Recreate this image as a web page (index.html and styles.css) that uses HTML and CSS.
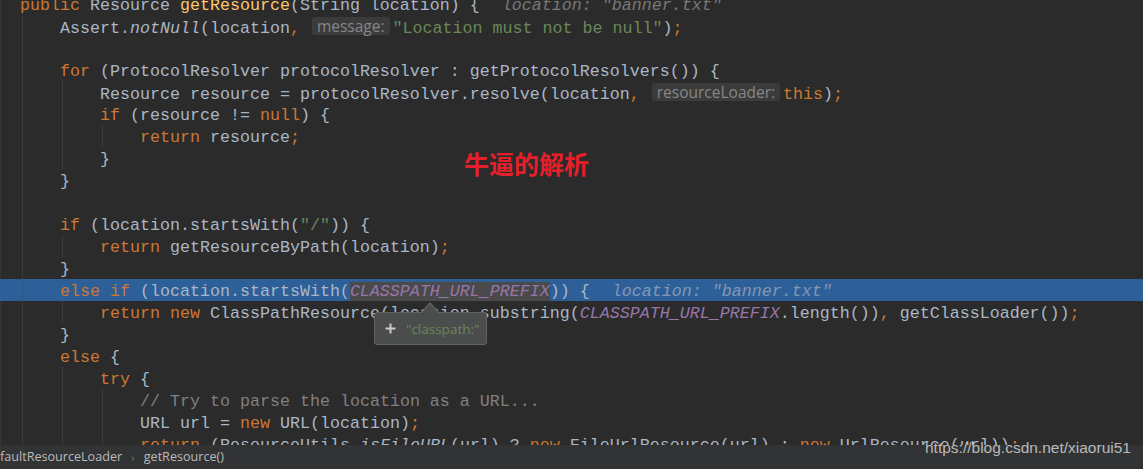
FILE: index.html
```html
<!DOCTYPE html>
<html>
<head>
<meta charset="utf-8">
<link rel="stylesheet" href="styles.css">
</head>
<body>
<div class="ide">
  <div class="editor">
    <div class="code">
      <div class="ln"><span class="k">public</span> Resource <span class="f">getResource</span>(String location) {<span class="dv">location: "banner.txt"</span></div>
      <div class="ln"><span class="i"></span>Assert.<span class="it">notNull</span>(location<span class="k">,</span> <span class="h">message:</span><span class="s">"Location must not be null"</span>)<span class="k">;</span></div>
      <div class="ln"><span class="i"></span></div>
      <div class="ln"><span class="i"></span><span class="k">for</span> (ProtocolResolver protocolResolver : getProtocolResolvers()) {</div>
      <div class="ln"><span class="i"></span><span class="i"></span>Resource resource = protocolResolver.resolve(location<span class="k">,</span> <span class="h">resourceLoader:</span><span class="k">this</span>)<span class="k">;</span></div>
      <div class="ln"><span class="i"></span><span class="i"></span><span class="k">if</span> (resource != <span class="k">null</span>) {</div>
      <div class="ln"><span class="i"></span><span class="i"></span><span class="i"></span><span class="k">return</span> resource<span class="k">;</span></div>
      <div class="ln"><span class="i"></span><span class="i"></span>}</div>
      <div class="ln"><span class="i"></span>}</div>
      <div class="ln"><span class="i"></span></div>
      <div class="ln"><span class="i"></span><span class="k">if</span> (location.startsWith(<span class="s">"/"</span>)) {</div>
      <div class="ln"><span class="i"></span><span class="i"></span><span class="k">return</span> getResourceByPath(location)<span class="k">;</span></div>
      <div class="ln"><span class="i"></span>}</div>
      <div class="ln exec"><span class="i"></span><span class="k">else if</span> (location.startsWith(<span class="c sel">CLASSPATH_URL_PREFIX</span>)) {<span class="dv">location: "banner.txt"</span></div>
      <div class="ln"><span class="i"></span><span class="i"></span><span class="k">return new</span> ClassPathResource(location.substring(<span class="c">CLASSPATH_URL_PREFIX</span>.length())<span class="k">,</span> getClassLoader())<span class="k">;</span></div>
      <div class="ln"><span class="i"></span>}</div>
      <div class="ln"><span class="i"></span><span class="k">else</span> {</div>
      <div class="ln"><span class="i"></span><span class="i"></span><span class="k">try</span> {</div>
      <div class="ln"><span class="i"></span><span class="i"></span><span class="i"></span><span class="cm">// Try to parse the location as a URL...</span></div>
      <div class="ln"><span class="i"></span><span class="i"></span><span class="i"></span>URL url = <span class="k">new</span> URL(location)<span class="k">;</span></div>
      <div class="ln"><span class="i"></span><span class="i"></span><span class="i"></span><span class="k">return</span> (ResourceUtils.<span class="it">isFileURL</span>(url) ? <span class="k">new</span> FileUrlResource(url) : <span class="k">new</span> UrlResource(url))<span class="k">;</span></div>
    </div>
    <div class="note">牛逼的解析</div>
    <div class="tip">
      <svg class="plus" width="11" height="11" viewBox="0 0 11 11"><path d="M5.5 0.5v10M0.5 5.5h10" stroke="#c9c9c9" stroke-width="2"/></svg>
      <span class="tipv">"classpath:"</span>
    </div>
  </div>
  <div class="status">
    <span class="crumb">faultResourceLoader</span>
    <span class="sep">›</span>
    <span class="crumb">getResource()</span>
    <span class="wm">https://blog.csdn.net/xiaorui51</span>
  </div>
</div>
</body>
</html>
```
FILE: styles.css
```css
html, body {
  margin: 0;
  padding: 0;
  background: #2b2b2b;
}
.ide {
  width: 1143px;
  height: 469px;
  display: flex;
  flex-direction: column;
  position: relative;
  overflow: hidden;
}
.editor {
  height: 445px;
  flex: none;
  overflow: hidden;
  position: relative;
  background: #2b2b2b;
  box-shadow: inset 1px 0 0 #363636;
}
.code {
  margin-top: -7px;
  font-family: "Liberation Mono", monospace;
  font-size: 16.66px;
  color: #a9b7c6;
}
.ln {
  height: 22px;
  box-sizing: border-box;
  padding-top: 2px;
  line-height: 22px;
  white-space: pre;
  padding-left: 20px;
}
.ln.exec {
  background: #2d5f99;
}
.i {
  display: inline-block;
  width: 40px;
  height: 22px;
  vertical-align: top;
  margin-top: -2px;
  background: linear-gradient(#3b3b3b, #3b3b3b) 2px 0 / 1px 100% no-repeat;
}
.exec .i {
  background: linear-gradient(#2a5587, #2a5587) 2px 0 / 1px 100% no-repeat;
}
.k { color: #cc7832; }
.s { color: #6a8759; }
.f { color: #ffc66d; }
.it { font-style: italic; }
.c { color: #9876aa; font-style: italic; }
.cm { color: #808080; }
.sel { background: #4a4a4a; }
.h {
  display: inline-block;
  height: 18px;
  line-height: 18px;
  vertical-align: 1px;
  margin: 0 3px 0 2px;
  padding: 0 5px;
  border-radius: 3px;
  background: #3b3b3b;
  color: #878787;
  font-family: "Open Sans", sans-serif;
  font-size: 15.5px;
}
.dv {
  margin-left: 22px;
  color: #787878;
  font-style: italic;
}
.exec .dv { color: #8398b3; }
.note {
  position: absolute;
  left: 464px;
  top: 147px;
  font-family: "Noto Sans CJK SC", sans-serif;
  font-weight: 700;
  font-size: 25px;
  line-height: 32px;
  color: #e5202a;
}
.tip {
  position: absolute;
  left: 374px;
  top: 312px;
  width: 111px;
  height: 31px;
  background: #4b4d4d;
  border: 1px solid #626464;
  border-radius: 3px;
  display: flex;
  align-items: center;
  gap: 10px;
}
.tip::before {
  content: "";
  position: absolute;
  left: 46px;
  top: -11px;
  border: 9px solid transparent;
  border-top: 0;
  border-bottom: 10px solid #626464;
}
.tip::after {
  content: "";
  position: absolute;
  left: 47px;
  top: -9px;
  border: 8px solid transparent;
  border-top: 0;
  border-bottom: 9px solid #4b4d4d;
}
.plus {
  margin-left: 10px;
}
.tipv {
  color: #6a8759;
  font-family: "Open Sans", sans-serif;
  font-size: 13.5px;
}
.status {
  height: 24px;
  flex: none;
  background: #313335;
  display: flex;
  align-items: center;
  gap: 9px;
  font-family: "Open Sans", sans-serif;
  font-size: 12.6px;
  color: #bbbbbb;
  position: relative;
}
.crumb { line-height: 24px; }
.sep { color: #6a6a6a; font-size: 12px; }
.wm {
  position: absolute;
  left: 925px;
  top: -6px;
  font-family: "Liberation Sans", sans-serif;
  font-size: 15.5px;
  color: #d0d0d0;
  opacity: 0.85;
}
```
